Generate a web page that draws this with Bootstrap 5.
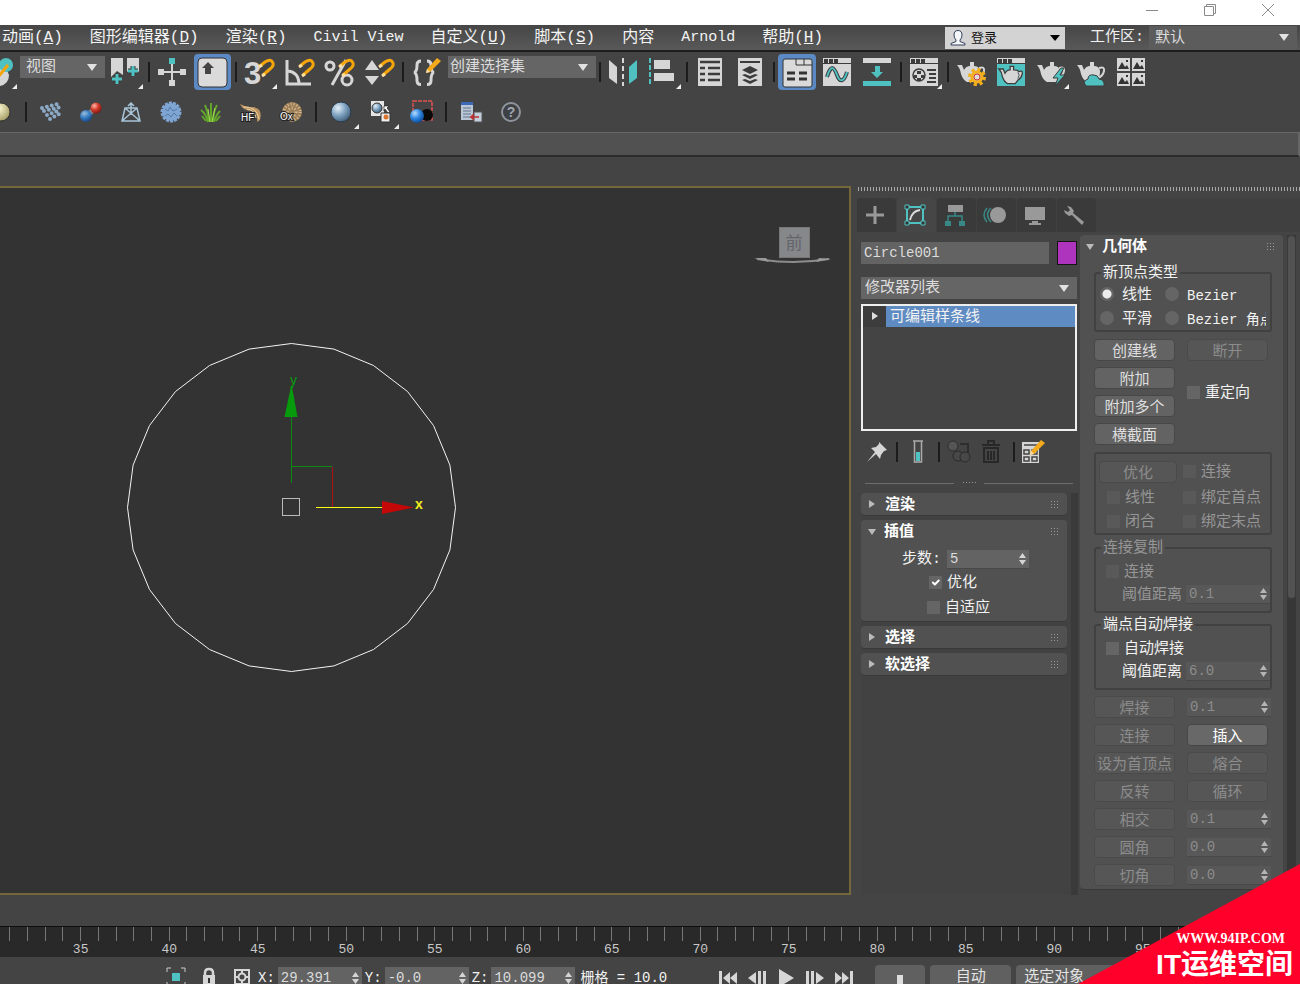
<!DOCTYPE html>
<html lang="zh-CN">
<head>
<meta charset="utf-8">
<meta name="viewport" content="width=device-width, initial-scale=1">
<title>Circle001</title>
<link href="https://cdn.jsdelivr.net/npm/bootstrap@5.3.0/dist/css/bootstrap.min.css" rel="stylesheet">
<style>
body{background:#444;color:#f2f2f2;font:15px/20px "Liberation Mono","Noto Sans CJK SC",monospace}
svg{display:block;flex:none}
button,input,select{font:inherit;color:inherit}
.titlebar{height:25px;background:#fff;padding-right:9px}
.titlebar button{width:46px;height:20px;border:0;background:none;padding:0;margin-left:12px}
.menubar{height:27px;border-bottom:2px solid #1d1d1d;background:linear-gradient(#464646,#595959);padding:0 3px 0 2px}
.menus{gap:27px;font-size:16px;line-height:24px}
.menus a{color:#f4f4f4;text-decoration:none}
.menus .latin{font-size:15px}
.login{width:120px;height:22px;border:0;background:#d3d3d3;color:#111;font-size:13px;padding:0 5px;margin-right:25px}
.login span{padding-top:2px}
.picker{appearance:none;border:0;border-radius:0;height:22px;padding:2px 6px 0;color:#ddd;background:#656565 url("data:image/svg+xml,%3Csvg xmlns='http://www.w3.org/2000/svg' width='10' height='7'%3E%3Cpath d='M0 0h10L5 7z' fill='%23e2e2e2'/%3E%3C/svg%3E") no-repeat right 8px center;line-height:20px}
.space-picker{width:148px;height:24px;background-color:#5c5c5c;margin-left:5px}
.tools{height:80px}
.tools .line{height:40px}
.tool{width:40px;height:36px;border:0;padding:0;background:none;flex:none}
.tool svg{overflow:visible}
.tool.edge{width:20px}
.tool.edge svg,.tool.edge2 svg{overflow:hidden}
.tool.edge2{width:21px}
.sep{width:7px;height:20px;flex:none;background:linear-gradient(#1c1c1c,#1c1c1c) center/2px 100% no-repeat}
.sep.wide{width:10px}
.ribbon{height:25px;background:#515151;border-top:1px solid #686868;border-bottom:2px solid #2b2b2b;border-right:2px solid #666}
.below-ribbon{height:29px}
.view{background:#333;border:2px solid #74673a;border-left:0;overflow:hidden;min-width:0}
.cube{top:30px;right:15px}
.command{width:443px;margin-left:6px}
.grip{height:4px;margin-top:1px;background:radial-gradient(circle,#aaa 1px,transparent 1px) 0 0/3px 2px}
.tabs{margin-top:7px;height:34px;gap:1px;background:#404040}
.tabs button{width:39px;border:0;padding:0 3px 0 0;background:#3a3a3a;border-radius:4px 4px 0 0;display:flex;align-items:center;justify-content:center}
.tabs button.active{background:#464646}
.stack-col{width:220px;padding:9px 0 0 4px}
.field{border:0;border-radius:0;background:#636363;color:#dcdcdc;font-size:14px;padding:0 3px;height:22px;min-width:0}
.swatch{width:20px;height:24px;padding:0;background:#ae33bd;border:1px solid #151515}
.stack{height:127px;border:2px solid #eee;margin-top:5px;background:#444}
.stack .entry{height:21px;background:#5e8bc2;line-height:23px}
.stack .twist{width:23px;background:#3c3c3c;border:0;padding:0}
.stack-tools{height:42px}
.stack-tools .cell{border:0;padding:0;background:none;display:flex;justify-content:center}
.split{height:20px;margin:0 4px}
.split i{height:1px;background:#6d6d6d;flex:1}
.rolls{background:#424242;border-right:7px solid #3a3a3a;gap:4px;display:flex;flex-direction:column;flex:1;margin-right:-1px;padding-right:4px}
.roll{background:#515151;border-radius:4px;border-bottom:1px solid #393939}
.roll-head{height:22px;width:100%;border:0;background:none;padding:0 8px 0 7px;display:flex;align-items:center;font-weight:bold;color:#fff}
.roll-head .title{margin-left:10px;flex:1;text-align:left;padding-top:3px}
.dots{width:9px;height:8px;background:radial-gradient(circle,#999 1px,transparent 1px) 0 0/3px 3px}
.spin{display:flex;align-items:center;background:#636363;height:19px;padding-right:3px;border-bottom:1px solid #484848}
.spin input{background:none;border:0;padding:0 3px;width:100%;min-width:0;color:#dcdcdc;font-size:14px;line-height:18px}
.opt{display:flex;align-items:center;gap:5px;white-space:nowrap;overflow:hidden;line-height:24px}
.opt span{padding-top:3px}
.form-check-input{margin:0;width:13px;height:13px;background-color:#656565;border:0;flex:none}
.form-check-input[type=checkbox]{border-radius:0}
.form-check-input[type=radio]{width:14px;height:14px}
.form-check-input:checked{background-color:#656565}
.form-check-input[type=radio]:checked{background-image:radial-gradient(circle,#eee 4px,transparent 5px)}
.form-check-input:disabled{opacity:1;background-color:#595959}
.geo-col{width:206px;margin:3px 0 0 1px}
.geo{height:655px;margin-left:2px;margin-right:1px}
.geo-body{padding:7px 11px 0 14px}
.box{border:2px solid #414141;border-radius:3px;min-width:0}
.box legend{float:none;width:auto;font-size:15px;line-height:20px;height:18px;margin:0 0 0 5px;padding:0 2px}
.radios{grid-template-columns:65px 1fr;grid-auto-rows:24px;padding:0 4px 0 4px}
.radios .opt{gap:8px}
.radios .latin{font-size:14px}
.pairs{grid-template-columns:81px 81px;grid-auto-rows:22px;gap:6px 12px}
.pairs .spin{margin-right:-3px}
.push{height:22px;padding:3px 0 0;border:1px solid #474747;border-radius:4px;background:#636363;color:#dedede;line-height:20px;white-space:nowrap}
.push.lit{color:#fff;background:#686868}
.push:disabled{background:#565656;border-color:#4a4a4a;color:#8c8c8c}
.off{color:#969696}
.off-spin{background:#585858}
.off-spin input{color:#8c8c8c}
.off-spin svg{opacity:.75}
.refine{grid-template-columns:84px 1fr;grid-template-rows:27px 24px 24px;padding:4px 3px 0 3px}
.weld{padding:3px 0 5px}
.weld>*{height:23px}
.weld label[for]{padding-top:3px}
.vbar{width:9px;margin:3px 0 0 3px;background:#373737}
.vbar div{height:364px;border-radius:4px;background:#525252;border:1px solid #3a3a3a}
.above-time{height:31px}
.ruler{height:31px;background:#292929;border-top:1px solid #0e0e0e;padding:0 7px 0 1px;overflow:hidden}
.frame{flex:1 1 0;min-width:0;display:flex;flex-direction:column;align-items:center;font-size:13px;line-height:17px;color:#c8c8c8}
.frame::before{content:"";width:1px;height:14px;flex:none;background:#777}
.status{height:27px;overflow:hidden;padding-top:8px}
.status .row-in{margin-left:159px;padding-top:2px}
.status .spin{width:84px;height:22px;margin-left:3px}
.status label{margin-left:3px;font-size:14px}
.status .ic{width:33px;height:22px;border:0;padding:0;background:none;display:flex;justify-content:center}
.play{border:0;padding:0;background:none;height:22px;width:29px;display:flex;justify-content:center;align-items:center}
.key{height:30px;border:0;border-radius:4px 4px 0 0;background:#606060;color:#e4e4e4;padding:0;line-height:26px;margin-right:5px;display:flex;justify-content:center}
.stamp{right:0;bottom:0;width:222px;height:120px;background:#fe0029;clip-path:polygon(100% 0,100% 100%,0 100%);color:#fff;text-align:right;padding:67px 7px 0 0}
.stamp .site{font:bold 14px/16px "Liberation Serif",serif;padding-right:8px}
.stamp .name{font:bold 28px/36px "Liberation Sans","Noto Sans CJK SC",sans-serif}
</style>
</head>
<body>
<svg width="0" height="0" class="position-absolute" aria-hidden="true">
<defs>
<radialGradient id="ball" cx=".35" cy=".3" r=".75"><stop offset="0" stop-color="#e8f2fa"/><stop offset=".5" stop-color="#7fa3c0"/><stop offset="1" stop-color="#3d5c78"/></radialGradient>
<radialGradient id="blue" cx=".35" cy=".3" r=".75"><stop offset="0" stop-color="#b5dcff"/><stop offset=".5" stop-color="#2e86e0"/><stop offset="1" stop-color="#0d468f"/></radialGradient>
<radialGradient id="red" cx=".35" cy=".3" r=".75"><stop offset="0" stop-color="#ffb5a5"/><stop offset=".5" stop-color="#d23a2a"/><stop offset="1" stop-color="#7d1710"/></radialGradient>
<radialGradient id="cream" cx=".35" cy=".3" r=".75"><stop offset="0" stop-color="#fffbd8"/><stop offset="1" stop-color="#a39b62"/></radialGradient>
<symbol id="fly" overflow="visible"><path d="M18 12v5h-5z" fill="#eee"/></symbol>
<symbol id="magnet" overflow="visible"><path d="M1-6 6-10Q12-14 14-9 15-6 11-3L4 3" fill="none" stroke="#f5a40a" stroke-width="3"/><path d="M0-5l3-2M3 4l3-2" stroke="#ffe0a0" stroke-width="3"/></symbol>
<symbol id="pot" overflow="visible"><path d="M-14-7H-9L-7-2Q-5-6-1-6V-10H3V-6Q8-6 9-1 9 7 5 10H-4Q-8 8-10 2-11-4-14-7z" fill="#d6d6d6"/><path d="M8-4Q14-6 13-1 12 4 7 6" fill="none" stroke="#d6d6d6" stroke-width="2"/></symbol>
<symbol id="win" overflow="visible"><path d="M-14-14h28v28h-28z" fill="#d6d6d6"/><path d="M-13-13h4v4h-4zM-8-13h4v4h-4zM-3-13h4v4h-4zM-14-9h28v1h-28z" fill="#3c3c3c"/></symbol>
<symbol id="ud" viewBox="0 0 7 12"><path d="M3.500 0 7 5H0zM3.500 12 7 7H0z" fill="#d4d4d4"/></symbol>
<symbol id="pencil" overflow="visible"><path d="M-6 7-5 3 5-8 9-5-2 6z" fill="#f3a91a"/><path d="M-6 7-5 3-2 6z" fill="#f7dfae"/></symbol>
</defs>
</svg>

<div class="vh-100 d-flex flex-column overflow-hidden position-relative">
<header class="titlebar d-flex justify-content-end flex-shrink-0">
<button aria-label="最小化"><svg width="46" height="20"><path d="M17 10.500h12" stroke="#8a8a8a"/></svg></button>
<button aria-label="还原"><svg width="46" height="20" fill="none" stroke="#8a8a8a"><path d="M17.500 6.500h9v9h-9zM19.500 6V4.500h9v9H27"/></svg></button>
<button aria-label="关闭"><svg width="46" height="20" stroke="#8a8a8a"><path d="M17 4l12 12M29 4L17 16"/></svg></button>
</header>

<div class="menubar d-flex align-items-center flex-shrink-0">
<nav class="menus d-flex text-nowrap">
<a href="#">动画(<u>A</u>)</a><a href="#">图形编辑器(<u>D</u>)</a><a href="#">渲染(<u>R</u>)</a><a href="#" class="latin">Civil View</a><a href="#">自定义(<u>U</u>)</a><a href="#">脚本(<u>S</u>)</a><a href="#">内容</a><a href="#" class="latin">Arnold</a><a href="#">帮助(<u>H</u>)</a>
</nav>
<button class="login d-flex align-items-center ms-auto"><svg width="17" height="18" viewBox="0 0 17 18"><path d="M8 1.500q4 0 4 4.500 0 3-2 5v1.500l5 2V16H1v-1.500l5-2V11Q4 9 4 6q0-4.500 4-4.500z" fill="#f4f6fa" stroke="#33415a"/></svg><span class="ms-1 me-auto">登录</span><svg width="10" height="6"><path d="M0 0h10L5 6z"/></svg></button>
<label for="space">工作区:</label>
<select id="space" class="picker space-picker"><option>默认</option></select>
</div>

<div class="tools flex-shrink-0">
<div class="line d-flex align-items-center">
<button class="tool edge" aria-label="绑定"><svg width="20" height="36" viewBox="0 -18 20 36"><path d="M0-4Q8-3 9 3 9 12 0 14z" fill="#d6d6d6"/><circle cx="6" cy="-7" r="7" fill="#4fc1c0"/><path d="M-2 5 8-7" stroke="#f5a40a" stroke-width="3"/><path d="M17 12v5h-5z" fill="#eee"/></svg></button>
<select class="picker align-self-start mt-1" style="width:85px" aria-label="参考坐标系"><option>视图</option></select>
<button class="tool" aria-label="轴心"><svg width="40" height="36" viewBox="-20 -18 40 36"><path d="M-14-14h12V3L-8-1l-6 6zM2-14h12V0L8-5 2 0z" fill="#d6d6d6"/><path d="M-8 2v10M-13 7h10M8-6V4M3-1h10" stroke="#3b3b3b" stroke-width="5"/><path d="M-8 2v10M-13 7h10M8-6V4M3-1h10" stroke="#4fc1c0" stroke-width="3"/><use href="#fly"/></svg></button>
<span class="sep"></span>
<button class="tool" aria-label="操纵"><svg width="40" height="36" viewBox="-20 -18 40 36"><path d="M-11 0h22M0-10v20" stroke="#d6d6d6" stroke-width="2"/><path d="M-14-3h6v6h-6zM8-3h6v6H8zM-3 8h6v6h-6z" fill="#d6d6d6"/><path d="M-3-14h6v6h-6z" fill="#4fc1c0"/></svg></button>
<button class="tool" aria-label="键盘快捷键覆盖"><svg width="40" height="36" viewBox="-20 -18 40 36"><rect x="-18" y="-18" width="37" height="36" rx="4" fill="#5b89c3"/><rect x="-14" y="-14" width="29" height="29" rx="4" fill="#dadada" stroke="#333"/><path d="M-4-10 2-4h-3v6h-6v-6h-3z" fill="#444"/></svg></button>
<span class="sep"></span>
<button class="tool" aria-label="捕捉开关"><svg width="40" height="36" viewBox="-20 -18 40 36"><text x="-15" y="12" font-family="Liberation Sans" font-weight="bold" font-size="31" fill="#d6d6d6">3</text><use href="#magnet"/><use href="#fly"/></svg></button>
<button class="tool" aria-label="角度捕捉"><svg width="40" height="36" viewBox="-20 -18 40 36"><path d="M-12-12v24h24M-11-1Q-1 0 0 11" fill="none" stroke="#d6d6d6" stroke-width="3"/><use href="#magnet"/></svg></button>
<button class="tool" aria-label="百分比捕捉"><svg width="40" height="36" viewBox="-20 -18 40 36" fill="none" stroke="#d6d6d6" stroke-width="3"><circle cx="-9" cy="-6" r="4"/><circle cx="8" cy="8" r="5"/><path d="M7-12-7 13"/><use href="#magnet"/></svg></button>
<button class="tool" aria-label="微调器捕捉"><svg width="40" height="36" viewBox="-20 -18 40 36"><path d="M-7-12 0-2h-14zM-7 13 0 4h-14z" fill="#d6d6d6"/><use href="#magnet"/></svg></button>
<span class="sep"></span>
<button class="tool" aria-label="编辑命名选择集"><svg width="40" height="36" viewBox="-20 -18 40 36"><path d="M-5-11q-4 0-4 4 0 7-3 7.500 3 .5 3 8 0 4 4 4M1-11q4 0 4 4 0 7 3 7.500-3 .5-3 8 0 4-4 4" fill="none" stroke="#d6d6d6" stroke-width="3"/><g transform="translate(6 -6)"><use href="#pencil"/></g></svg></button>
<select class="picker align-self-start mt-1" style="width:148px;padding-left:2px;margin-left:2px" aria-label="选择集"><option>创建选择集</option></select>
<span class="sep"></span>
<button class="tool" aria-label="镜像"><svg width="40" height="36" viewBox="-20 -18 40 36"><path d="M-14-12-6-5v17l-8-6z" fill="#d6d6d6"/><path d="M14-12 6-5v17l8-6z" fill="#4fc1c0"/><path d="M0-14v28" stroke="#d6d6d6" stroke-width="2" stroke-dasharray="5 3"/></svg></button>
<button class="tool" aria-label="对齐"><svg width="40" height="36" viewBox="-20 -18 40 36"><path d="M-9-12H7v9H-9zM-9 1h20v8H-9z" fill="#d6d6d6"/><path d="M-13-14v28" stroke="#4fc1c0" stroke-width="2" stroke-dasharray="5 2"/><use href="#fly"/></svg></button>
<span class="sep"></span>
<button class="tool" aria-label="场景资源管理器"><svg width="40" height="36" viewBox="-20 -18 40 36"><path d="M-12-14h24v28h-24z" fill="#d6d6d6"/><path d="M-10-10h20M-10-4h5M-2-4h12M-10 2h5M-2 2h12M-10 8h5M-2 8h12" stroke="#3c3c3c" stroke-width="2.500"/></svg></button>
<button class="tool" aria-label="层资源管理器"><svg width="40" height="36" viewBox="-20 -18 40 36"><path d="M-12-14h24v28h-24z" fill="#d6d6d6"/><path d="M-10-10h20" stroke="#3c3c3c" stroke-width="2"/><path d="M0-6 8-2 0 2-8-2zM-8 3l3-1 5 2 5-2 3 1-8 4zM-8 8l3-1 5 2 5-2 3 1-8 4z" fill="#3c3c3c"/></svg></button>
<span class="sep"></span>
<button class="tool" aria-label="切换功能区"><svg width="40" height="36" viewBox="-20 -18 40 36"><rect x="-19" y="-18" width="38" height="36" rx="4" fill="#5b89c3"/><rect x="-14" y="-13" width="29" height="28" rx="2" fill="#dadada" stroke="#333"/><path d="M-1-13v6h16M7-13v6" fill="none" stroke="#333"/><path d="M-10 1h8M2 1h8M-10 7h8M2 7h8" stroke="#333" stroke-width="3"/></svg></button>
<button class="tool" aria-label="曲线编辑器"><svg width="40" height="36" viewBox="-20 -18 40 36"><use href="#win"/><path d="M-10 5C-6-8-3-5 0 3S7 10 10 0" fill="none" stroke="#3c3c3c" stroke-width="4"/><path d="M-10 5C-6-8-3-5 0 3S7 10 10 0" fill="none" stroke="#4fc1c0" stroke-width="2"/></svg></button>
<button class="tool" aria-label="图解视图"><svg width="40" height="36" viewBox="-20 -18 40 36"><path d="M-14-14h28v5h-28z" fill="#d6d6d6"/><path d="M-14 9h28v5h-28zM-2-6h5v6h3L0 6-6 0h4z" fill="#4fc1c0"/></svg></button>
<span class="sep"></span>
<button class="tool" aria-label="材质编辑器"><svg width="40" height="36" viewBox="-20 -18 40 36"><use href="#win"/><circle cx="-5" cy="3" r="6" fill="#d6d6d6" stroke="#3c3c3c" stroke-width="1.500"/><path d="M-7-1h4v3h-4zM-10 3h3v3h-3zM-3 3h3v3h-3zM-7 6h4v3h-4z" fill="#3c3c3c"/><path d="M3-2h9M5 2h7M5 6h7M3 10h9" stroke="#3c3c3c" stroke-width="2"/><use href="#fly"/></svg></button>
<span class="sep"></span>
<button class="tool" aria-label="渲染设置"><svg width="40" height="36" viewBox="-20 -18 40 36"><use href="#pot"/><circle cx="6" cy="5" r="7" fill="none" stroke="#f3b01c" stroke-width="4" stroke-dasharray="3 2.500"/><circle cx="6" cy="5" r="5" fill="#ddd" stroke="#f3b01c" stroke-width="3"/><circle cx="6" cy="5" r="3" fill="#ddd" stroke="#c33" /></svg></button>
<button class="tool" aria-label="渲染帧窗口"><svg width="40" height="36" viewBox="-20 -18 40 36"><use href="#win"/><path d="M-14-8h28v22h-28z" fill="#4fc1c0"/><g transform="translate(0 3) scale(.86)"><path d="M-14-7H-9L-7-2Q-5-6-1-6V-10H3V-6Q8-6 9-4 14-6 13-1 12 4 8 6L5 10H-4Q-8 8-10 2-11-4-14-7z" fill="#d6d6d6" stroke="#3c3c3c" stroke-width="1.500"/><path d="M8-3q3 3 0 7" fill="none" stroke="#3c3c3c"/></g></svg></button>
<button class="tool" aria-label="渲染产品"><svg width="40" height="36" viewBox="-20 -18 40 36"><use href="#pot"/><path d="M10-4 2 6h5L4 14 14 3H9L13-4z" fill="#4fc1c0" stroke="#3c3c3c"/><use href="#fly"/></svg></button>
<button class="tool" aria-label="在线渲染"><svg width="40" height="36" viewBox="-20 -18 40 36"><use href="#pot"/><path d="M-5 14q-4-5 2-7 0-5 6-4 4 0 5 4 6 1 5 7z" fill="#4fc1c0" stroke="#3c3c3c"/></svg></button>
<button class="tool" aria-label="图库"><svg width="40" height="36" viewBox="-20 -18 40 36"><path d="M-14-14h13v13h-13zM1-14h13v13H1zM-14 1h13v13h-13zM1 1h13v13H1z" fill="#d6d6d6"/><path d="M-13-3l4-7 3 5 2-2 2 4zM2-3l4-7 3 5 2-2 2 4zM-13 12l4-7 3 5 2-2 2 4zM2 12l4-7 3 5 2-2 2 4z" fill="#333"/><path d="M-5-12h2v2h-2zM10-12h2v2h-2zM-5 3h2v2h-2zM10 3h2v2h-2z" fill="#333"/></svg></button>
</div>
<div class="line d-flex align-items-center">
<button class="tool edge2" aria-label="灯光"><svg width="21" height="36" viewBox="0 -18 21 36"><circle cx="1" cy="0" r="9" fill="url(#cream)" stroke="#333"/></svg></button>
<span class="sep wide"></span>
<button class="tool" aria-label="阵列"><svg width="40" height="36" viewBox="-20 -18 40 36"><g fill="none" stroke="#8ba8c5" stroke-width="4" stroke-linecap="round" stroke-dasharray="0 5"><path d="M-9-4 7-8M-7-1 10-5M-4 3l13-5M-1 7l9-5"/></g></svg></button>
<button class="tool" aria-label="分子"><svg width="40" height="36" viewBox="-20 -18 40 36"><path d="M-4 3 4-3" stroke="#888" stroke-width="5"/><circle cx="-5" cy="4" r="6" fill="url(#blue)" opacity=".8"/><circle cx="5" cy="-4" r="5.500" fill="url(#red)"/></svg></button>
<button class="tool" aria-label="摄影机"><svg width="40" height="36" viewBox="-20 -18 40 36" fill="none" stroke="#a8c4d8" stroke-width="1.500"><path d="M-6-4H6l3 13H-9zM0-9v12M-3-6l3-3 3 3M-9 9 6-4M9 9-6-4"/></svg></button>
<button class="tool" aria-label="噪波球"><svg width="40" height="36" viewBox="-20 -18 40 36"><circle r="9" fill="#7fa5d2"/><circle r="9" fill="none" stroke="#7fa5d2" stroke-width="3" stroke-dasharray="3 1"/><path d="M-6-3l3 2 2-4 3 4 4-2M-6 4l3-2 3 3 3-4 3 3" fill="none" stroke="#5279ab"/></svg></button>
<button class="tool" aria-label="草"><svg width="40" height="36" viewBox="-20 -18 40 36"><path d="M-3 10Q-5 2-10-2M-2 10Q-3 0-6-7M0 10V-9M2 10Q2 0 6-7M3 10Q5 3 9-1M-5 9-9 4M5 9l4-5" fill="none" stroke="#63a52a" stroke-width="2"/><path d="M-1 10-3-3M1 10 4-4" stroke="#a5dc55"/></svg></button>
<button class="tool" aria-label="毛发"><svg width="40" height="36" viewBox="-20 -18 40 36"><path d="M-11-8Q-4-4 2-5 12-4 9 8L6 10Q7 1 1-1-8-1-11-8z" fill="#bd9461"/><path d="M-8-5Q6-6 8 7M-4-3Q4-2 5 6" fill="none" stroke="#ecd2a0"/><text x="-10" y="9" font-family="Liberation Sans" font-size="10" fill="#fff" stroke="#222" stroke-width="2" paint-order="stroke">HF</text></svg></button>
<button class="tool" aria-label="Ox"><svg width="40" height="36" viewBox="-20 -18 40 36"><circle cx="1" r="10" fill="#9b7c56"/><circle cx="1" r="8" fill="none" stroke="#d8bd92" stroke-width="3" stroke-dasharray="1 2"/><circle cx="1" r="4" fill="none" stroke="#d8bd92" stroke-width="3" stroke-dasharray="1 2"/><text x="-11" y="8" font-family="Liberation Sans" font-size="10" fill="#fff" stroke="#222" stroke-width="2" paint-order="stroke">Ox</text></svg></button>
<span class="sep wide"></span>
<button class="tool" aria-label="球体"><svg width="40" height="36" viewBox="-20 -18 40 36"><circle r="10" fill="url(#ball)" stroke="#2d3b48"/><use href="#fly"/></svg></button>
<button class="tool" aria-label="选择材质"><svg width="40" height="36" viewBox="-20 -18 40 36"><path d="M-10-11H3V4h-13z" fill="#e6e6e6"/><circle cx="-4" cy="-4" r="5" fill="url(#ball)" stroke="#333"/><path d="M3-6h5L6-4l3 4-2 1-3-4-1 2z" fill="#fff" stroke="#222" stroke-width=".7"/><path d="M0 1h9v9H0z" fill="#eee" stroke="#333"/><circle cx="5" cy="5" r="2.500" fill="#d9752d"/><use href="#fly"/></svg></button>
<button class="tool" aria-label="渲染区域"><svg width="40" height="36" viewBox="-20 -18 40 36"><path d="M-8-11h19V8H-8z" fill="none" stroke="#e05252" stroke-width="1.500" stroke-dasharray="4 1"/><circle cx="6" cy="3" r="6" fill="#0a0a0a"/><circle cx="-4" cy="4" r="7" fill="url(#blue)"/></svg></button>
<span class="sep wide"></span>
<button class="tool" aria-label="转换"><svg width="40" height="36" viewBox="-20 -18 40 36"><path d="M-10-9H2V8h-12z" fill="#b9c6d6"/><path d="M-10-10H2v3h-12z" fill="#3b69b5"/><path d="M-8-4h8M-8-1h8M-8 2h8M-8 5h8" stroke="#66758a"/><path d="M3 0h8v10H3z" fill="#c3cfdd" stroke="#555"/><path d="M8 5H0l3-3M0 5l3 3" fill="none" stroke="#c03030" stroke-width="1.500"/></svg></button>
<button class="tool" aria-label="帮助"><svg width="40" height="36" viewBox="-20 -18 40 36"><circle r="9" fill="#3d4146" stroke="#8f959c" stroke-width="2"/><text x="0" y="5" text-anchor="middle" font-family="Liberation Sans" font-weight="bold" font-size="14" fill="#a0a6ad">?</text></svg></button>
</div>
</div>
<div class="ribbon flex-shrink-0"></div>
<div class="below-ribbon flex-shrink-0"></div>

<main class="d-flex flex-grow-1" style="min-height:0">
<section class="view flex-grow-1 position-relative" aria-label="视口">
<svg class="w-100 h-100"><g transform="translate(0 -188)">
<polygon id="ring" fill="none" stroke="#f4f4f4"/>
<path d="M291.500 483V410M291 466.500h41" fill="none" stroke="#0b8a12"/><path d="M291.500 384l6 33h-13z" fill="#069a0c"/>
<path d="M332.500 467v40" stroke="#b01010"/><path d="M316 507.500h67" stroke="#ffff10"/><path d="M414 507.500 382 501v13z" fill="#c40808"/>
<rect x="282.500" y="498.500" width="17" height="17" fill="none" stroke="#bbb"/>
<text x="290" y="385" font-family="Liberation Sans" font-size="14" fill="#0b9a12">y</text>
<text x="415" y="509" font-family="Liberation Sans" font-weight="bold" font-size="14" fill="#f2ee1c">x</text>
</g></svg>
<svg class="cube position-absolute" width="84" height="60" viewBox="750 218 84 60"><path d="M757 259Q793 265 829 259" fill="none" stroke="#8d8d8d" stroke-width="2"/><path d="M754 258l12 0 3 4zM831 259l-12-1-3 4z" fill="#9a9a9a"/><path d="M779 227h31v31h-31z" fill="#858789"/><path d="M779.500 227.500h30v30h-30z" fill="none" stroke="#777"/><text x="794" y="249" text-anchor="middle" font-size="17" font-family="Noto Sans CJK SC" fill="#62656c">前</text></svg>
</section>

<aside class="command flex-shrink-0 d-flex flex-column">
<div class="grip flex-shrink-0"></div>
<div class="tabs d-flex flex-shrink-0">
<button aria-label="创建"><svg width="22" height="22"><path d="M11 2v18M2 11h18" stroke="#999" stroke-width="3"/></svg></button>
<button class="active" aria-label="修改"><svg width="22" height="22" fill="none"><path d="M3 3h16v16H3z" stroke="#4fc1c0" stroke-width="2"/><path d="M1 1h4v4H1zM17 1h4v4h-4zM1 17h4v4H1zM17 17h4v4h-4z" fill="#333" stroke="#4fc1c0"/><path d="M6 16Q8 7 16 6" stroke="#ddd" stroke-width="2"/></svg></button>
<button aria-label="层次"><svg width="22" height="22"><path d="M4 1h15v7H4z" fill="#999"/><path d="M11 8v4M4 17v-5h14v5" fill="none" stroke="#388885" stroke-width="1.500"/><path d="M1 17h6v5H1zM15 17h6v5h-6z" fill="#388885"/></svg></button>
<button aria-label="运动"><svg width="24" height="22" fill="none"><path d="M8 4q-7 6 0 14M4 4q-6 7 0 14" stroke="#388885" stroke-width="1.500"/><circle cx="15" cy="11" r="8" fill="#999"/></svg></button>
<button aria-label="显示"><svg width="22" height="22" fill="#999"><path d="M1 3h20v13H1zM8 17h6v2h3v2H5v-2h3z"/></svg></button>
<button aria-label="实用程序"><svg width="22" height="22"><path d="M3 2l4 1 3 4-1 2 11 9-2 3L8 11l-3 1-4-3-1-3 4 2 2-2z" fill="#999"/></svg></button>
</div>
<div class="d-flex flex-grow-1" style="min-height:0">
<div class="stack-col d-flex flex-column">
<div class="d-flex align-items-center gap-2"><input class="field flex-grow-1" value="Circle001" aria-label="名称"><button class="swatch" aria-label="颜色"></button></div>
<select class="picker w-100 flex-shrink-0" style="margin-top:12px;padding-left:4px" aria-label="修改器列表"><option>修改器列表</option></select>
<div class="stack"><div class="entry d-flex"><button class="twist" aria-label="展开"><svg width="23" height="21"><path d="M9 6l6 4-6 4z" fill="#ddd"/></svg></button><span class="ms-1">可编辑样条线</span></div></div>
<div class="stack-tools d-flex align-items-center">
<button class="cell" style="width:32px" aria-label="锁定堆栈"><svg width="22" height="22"><path d="M13 1l8 8-3 1-3 4-1 4-4-5-9 8 8-10-4-4 5-1 3-3z" fill="#d6d6d6"/></svg></button><span class="sep"></span>
<button class="cell" style="width:35px" aria-label="显示最终结果"><svg width="12" height="24"><path d="M1 1h10M2.500 1v21h7V1" fill="none" stroke="#aaa" stroke-width="1.500"/><path d="M4 12h4v9H4z" fill="#4fc1c0"/></svg></button><span class="sep"></span>
<button class="cell" style="width:34px" aria-label="使唯一"><svg width="24" height="24"><circle cx="6" cy="6" r="5" fill="#555" stroke="#2e2e2e"/><path d="M13 4h8v9M11 20h10" fill="none" stroke="#2e2e2e" stroke-width="2"/><circle cx="11" cy="16" r="5" fill="#484848" stroke="#2a2a2a"/><circle cx="18" cy="17" r="5" fill="#484848" stroke="#2a2a2a"/></svg></button>
<button class="cell" style="width:30px" aria-label="移除修改器"><svg width="20" height="24" fill="none" stroke="#282828" stroke-width="2"><path d="M1 5h18M7 4V1h6v3M3 8h14v14H3zM7 11v9M10 11v9M13 11v9"/></svg></button><span class="sep ms-1"></span>
<button class="cell" style="width:32px" aria-label="配置修改器集"><svg width="24" height="24"><path d="M1 2h17v21H1z" fill="#d6d6d6"/><path d="M3 5h13M3 10h5v4H3zM11 10h5v4h-5zM3 17h5v4H3zM11 17h5v4h-5z" fill="none" stroke="#444" stroke-width="1.500"/><g transform="translate(15 8)"><use href="#pencil"/></g></svg></button>
</div>
<div class="split d-flex align-items-center gap-2 flex-shrink-0"><i></i><span class="dots" style="height:4px;width:14px"></span><i></i></div>
<div class="rolls">
<section class="roll"><button class="roll-head"><svg width="7" height="10"><path d="M1 1l6 4-6 4z" fill="#bbb"/></svg><span class="title">渲染</span><span class="dots"></span></button></section>
<section class="roll"><button class="roll-head"><svg width="8" height="7"><path d="M0 1h8L4 7z" fill="#bbb"/></svg><span class="title ms-2">插值</span><span class="dots"></span></button>
<div class="d-flex align-items-center" style="padding:6px 0 1px 41px"><label for="steps" style="padding-top:2px">步数:</label><div class="spin" style="width:82px;margin-left:6px"><input id="steps" value="5"><svg width="7" height="12"><use href="#ud"/></svg></div></div>
<label class="opt" style="padding-left:68px;height:23px"><input class="form-check-input" type="checkbox" checked><span>优化</span></label>
<label class="opt" style="padding-left:66px;height:27px"><input class="form-check-input" type="checkbox"><span>自适应</span></label></section>
<section class="roll"><button class="roll-head"><svg width="7" height="10"><path d="M1 1l6 4-6 4z" fill="#bbb"/></svg><span class="title">选择</span><span class="dots"></span></button></section>
<section class="roll"><button class="roll-head"><svg width="7" height="10"><path d="M1 1l6 4-6 4z" fill="#bbb"/></svg><span class="title">软选择</span><span class="dots"></span></button></section>
</div>
</div>

<div class="geo-col">
<section class="roll geo"><button class="roll-head" style="padding-left:6px"><svg width="8" height="7"><path d="M0 1h8L4 7z" fill="#bbb"/></svg><span class="title ms-2">几何体</span><span class="dots"></span></button>
<div class="geo-body">
<fieldset class="box"><legend>新顶点类型</legend><div class="d-grid radios">
<label class="opt"><input class="form-check-input" type="radio" name="vt" checked><span>线性</span></label><label class="opt latin"><input class="form-check-input" type="radio" name="vt"><span>Bezier</span></label>
<label class="opt"><input class="form-check-input" type="radio" name="vt"><span>平滑</span></label><label class="opt latin"><input class="form-check-input" type="radio" name="vt"><span>Bezier 角点</span></label></div></fieldset>
<div class="d-grid pairs" style="margin:7px 0">
<button class="push">创建线</button><button class="push" disabled>断开</button>
<button class="push">附加</button><label class="opt" style="grid-row:span 2"><input class="form-check-input" type="checkbox"><span>重定向</span></label>
<button class="push">附加多个</button><button class="push">横截面</button></div>
<fieldset class="box off" disabled><div class="d-grid refine align-items-center">
<button class="push" style="width:78px">优化</button><label class="opt"><input class="form-check-input" type="checkbox"><span>连接</span></label>
<label class="opt ps-2"><input class="form-check-input" type="checkbox"><span>线性</span></label><label class="opt"><input class="form-check-input" type="checkbox"><span>绑定首点</span></label>
<label class="opt ps-2"><input class="form-check-input" type="checkbox"><span>闭合</span></label><label class="opt"><input class="form-check-input" type="checkbox"><span>绑定末点</span></label></div></fieldset>
<fieldset class="box off" disabled style="margin-top:4px"><legend>连接复制</legend><div class="weld">
<label class="opt" style="padding-left:10px"><input class="form-check-input" type="checkbox"><span>连接</span></label>
<div class="d-flex align-items-center" style="padding-left:26px"><label for="t1" class="text-nowrap">阈值距离</label><div class="spin off-spin flex-grow-1 ms-1"><input id="t1" value="0.1"><svg width="7" height="12"><use href="#ud"/></svg></div></div></div></fieldset>
<fieldset class="box" style="margin-top:3px"><legend>端点自动焊接</legend><div class="weld">
<label class="opt" style="padding-left:10px"><input class="form-check-input" type="checkbox"><span>自动焊接</span></label>
<div class="d-flex align-items-center" style="padding-left:26px"><label for="t2" class="text-nowrap">阈值距离</label><div class="spin off-spin flex-grow-1 ms-1"><input id="t2" value="6.0" disabled><svg width="7" height="12"><use href="#ud"/></svg></div></div></div></fieldset>
<div class="d-grid pairs align-items-center" style="margin-top:6px">
<button class="push" disabled>焊接</button><div class="spin off-spin"><input value="0.1" disabled aria-label="焊接"><svg width="7" height="12"><use href="#ud"/></svg></div>
<button class="push" disabled>连接</button><button class="push lit">插入</button>
<button class="push" disabled>设为首顶点</button><button class="push" disabled>熔合</button>
<button class="push" disabled>反转</button><button class="push" disabled>循环</button>
<button class="push" disabled>相交</button><div class="spin off-spin"><input value="0.1" disabled aria-label="相交"><svg width="7" height="12"><use href="#ud"/></svg></div>
<button class="push" disabled>圆角</button><div class="spin off-spin"><input value="0.0" disabled aria-label="圆角"><svg width="7" height="12"><use href="#ud"/></svg></div>
<button class="push" disabled>切角</button><div class="spin off-spin"><input value="0.0" disabled aria-label="切角"><svg width="7" height="12"><use href="#ud"/></svg></div>
</div></div></section>
</div>
<div class="vbar"><div></div></div>
</div>
</aside>
</main>

<div class="above-time flex-shrink-0"></div>
<div class="ruler d-flex flex-shrink-0" id="ruler"></div>

<footer class="status d-flex align-items-start text-nowrap flex-shrink-0">
<div class="row-in d-flex align-items-center">
<button class="ic" aria-label="孤立"><svg width="20" height="20" fill="none" stroke="#ccc"><path d="M1 5V1h4M15 1h4v4M1 15v4h4M15 19h4v-4"/><path d="M6 6h8v8H6z" fill="#4fc1c0" stroke="none"/></svg></button>
<button class="ic" aria-label="锁定"><svg width="14" height="20"><path d="M3 9V6q0-4 4-4t4 4v3" fill="none" stroke="#d6d6d6" stroke-width="2.500"/><path d="M1 8h12v11H1z" fill="#d6d6d6"/><path d="M6 11h2v5H6z" fill="#333"/></svg></button>
<button class="ic" aria-label="绝对模式"><svg width="18" height="20" fill="none" stroke="#d6d6d6" stroke-width="2"><path d="M2 3h14v14H2zM2 10h3M13 10h3M9 3v3M9 14v3"/><circle cx="9" cy="10" r="3.500"/></svg></button>
<label for="cx" class="ms-0">X:</label><div class="spin"><input id="cx" value="29.391"><svg width="7" height="12"><use href="#ud"/></svg></div>
<label for="cy">Y:</label><div class="spin"><input id="cy" value="-0.0"><svg width="7" height="12"><use href="#ud"/></svg></div>
<label for="cz">Z:</label><div class="spin"><input id="cz" value="10.099"><svg width="7" height="12"><use href="#ud"/></svg></div>
<span style="font-size:14px;margin:0 46px 0 5px">栅格 = 10.0</span>
<button class="play" aria-label="转至开头"><svg width="20" height="14" fill="#d6d6d6"><path d="M1 0h3v14H1zM12 1v12L5 7zM19 1v12l-7-6z"/></svg></button>
<button class="play" aria-label="上一帧"><svg width="20" height="14" fill="#d6d6d6"><path d="M9 1v12L1 7zM11 0h3v14h-3zM16 0h3v14h-3z"/></svg></button>
<button class="play" aria-label="播放"><svg width="16" height="20" fill="#d6d6d6"><path d="M1 1l15 9-15 9z"/></svg></button>
<button class="play" aria-label="下一帧"><svg width="20" height="14" fill="#d6d6d6"><path d="M11 1v12l8-6zM6 0h3v14H6zM1 0h3v14H1z"/></svg></button>
<button class="play" aria-label="转至结尾"><svg width="20" height="14" fill="#d6d6d6"><path d="M16 0h3v14h-3zM1 1v12l7-6zM8 1v12l7-6z"/></svg></button>
</div>
<button class="key" style="width:50px;margin-left:17px" aria-label="关键帧"><svg width="10" height="26"><path d="M2 10h6v16H2z" fill="#ddd"/></svg></button>
<button class="key" style="width:81px">自动</button>
<button class="key flex-grow-1 justify-content-start ps-2">选定对象</button>
</footer>

<div class="stamp position-absolute"><div class="site">WWW.94IP.COM</div><div class="name">IT运维空间</div></div>
</div>
<script src="https://cdn.jsdelivr.net/npm/bootstrap@5.3.0/dist/js/bootstrap.bundle.min.js"></script>
<script>
// 24-sided spline preview
const pts = [];
for (let i = 0; i < 24; i++) {
  const a = i * Math.PI / 12;
  pts.push((291.5 + 164 * Math.cos(a)).toFixed(1) + ',' + (507.5 + 164 * Math.sin(a)).toFixed(1));
}
document.getElementById('ring').setAttribute('points', pts.join(' '));
// one cell per frame, a number on every fifth
const ruler = document.getElementById('ruler');
for (let f = 31; f <= 103; f++) {
  const c = document.createElement('div');
  c.className = 'frame';
  if (f % 5 === 0) c.textContent = f;
  ruler.appendChild(c);
}
</script>
</body>
</html>
